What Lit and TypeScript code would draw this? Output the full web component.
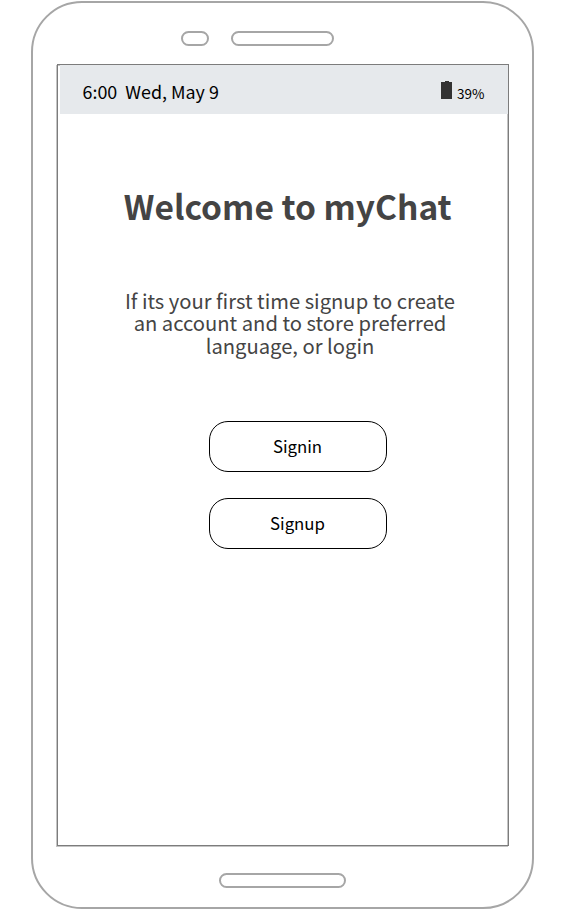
import { LitElement, html, css, svg } from "lit";
import { customElement, property } from "lit/decorators.js";

const FONT = css`"Noto Sans CJK SC", "Noto Sans", sans-serif`;

@customElement("status-bar")
class StatusBar extends LitElement {
  @property() clock = "";
  @property() battery = "";

  static styles = css`
    :host {
      display: flex;
      box-sizing: border-box;
      justify-content: space-between;
      height: 49px;
      margin-left: 2px;
      padding: 0 23.5px 0 22.5px;
      background: #e6e9ec;
      color: #000;
      font-family: ${FONT};
      white-space: pre;
    }
    .clock {
      font-size: 17.9px;
      line-height: 24px;
      margin-top: 14px;
    }
    .power {
      display: flex;
      align-items: flex-start;
      gap: 5px;
      font-size: 13.5px;
      margin-top: 16px;
    }
    .level {
      margin-top: 3px;
      line-height: 18px;
    }
    svg {
      display: block;
    }
  `;

  render() {
    return html`
      <div class="clock">${this.clock}</div>
      <div class="power">
        <svg width="11" height="18" viewBox="0 0 11 18" shape-rendering="crispEdges">
          ${svg`<path fill="#333" d="M4 0h4v1h3v17H0V1h4z" />`}
        </svg>
        <span class="level">${this.battery}</span>
      </div>
    `;
  }
}

@customElement("app-root")
class AppRoot extends LitElement {
  static styles = css`
    :host {
      display: block;
      box-sizing: border-box;
      height: 915px;
      padding: 1px 0 0 31px;
      background: #fff;
      font-family: ${FONT};
      overflow: hidden;
    }
    .phone,
    .slot {
      box-sizing: border-box;
      border: 2px solid #a6a6a6;
    }
    .phone {
      display: flex;
      flex-direction: column;
      width: 503px;
      height: 908px;
      border-radius: 51px;
    }
    .top {
      display: flex;
      gap: 22px;
      box-sizing: border-box;
      height: 61px;
      padding: 28px 0 0 148px;
    }
    .slot {
      height: 15px;
      border-radius: 7.5px;
    }
    .camera {
      width: 28px;
    }
    .speaker {
      width: 103px;
    }
    .home {
      width: 127px;
      margin: 27px 0 0 186px;
    }
    .screen {
      box-sizing: border-box;
      width: 452px;
      height: 782px;
      margin-left: 24px;
      border: 1px solid #7c7c7c;
      box-shadow: -1px 1px 0 #c4c4c4, inset -1px 1px 0 #c4c4c4;
    }
    h1 {
      margin: 67px 0 0 9.5px;
      font-size: 33.5px;
      line-height: 50px;
      font-weight: 700;
      color: #444;
      text-align: center;
      white-space: nowrap;
    }
    p {
      margin: 58.5px 0 0 14px;
      font-size: 20.2px;
      line-height: 22.5px;
      color: #444;
      text-align: center;
      white-space: nowrap;
    }
    .actions {
      display: flex;
      flex-direction: column;
      gap: 26px;
      margin: 64px 0 0 151px;
    }
    button {
      box-sizing: border-box;
      width: 178px;
      height: 51px;
      padding: 0 1px 0 0;
      border: 1px solid #000;
      border-radius: 19px;
      background: #fff;
      color: #000;
      font: 16.8px/49px ${FONT};
    }
  `;

  render() {
    return html`
      <div class="phone">
        <div class="top">
          <div class="slot camera"></div>
          <div class="slot speaker"></div>
        </div>
        <div class="screen">
          <status-bar clock="6:00  Wed, May 9" battery="39%"></status-bar>
          <h1>Welcome to myChat</h1>
          <p>
            If its your first time signup to create<br />an account and to store
            preferred<br />language, or login
          </p>
          <div class="actions">
            <button>Signin</button>
            <button>Signup</button>
          </div>
        </div>
        <div class="slot home"></div>
      </div>
    `;
  }
}
